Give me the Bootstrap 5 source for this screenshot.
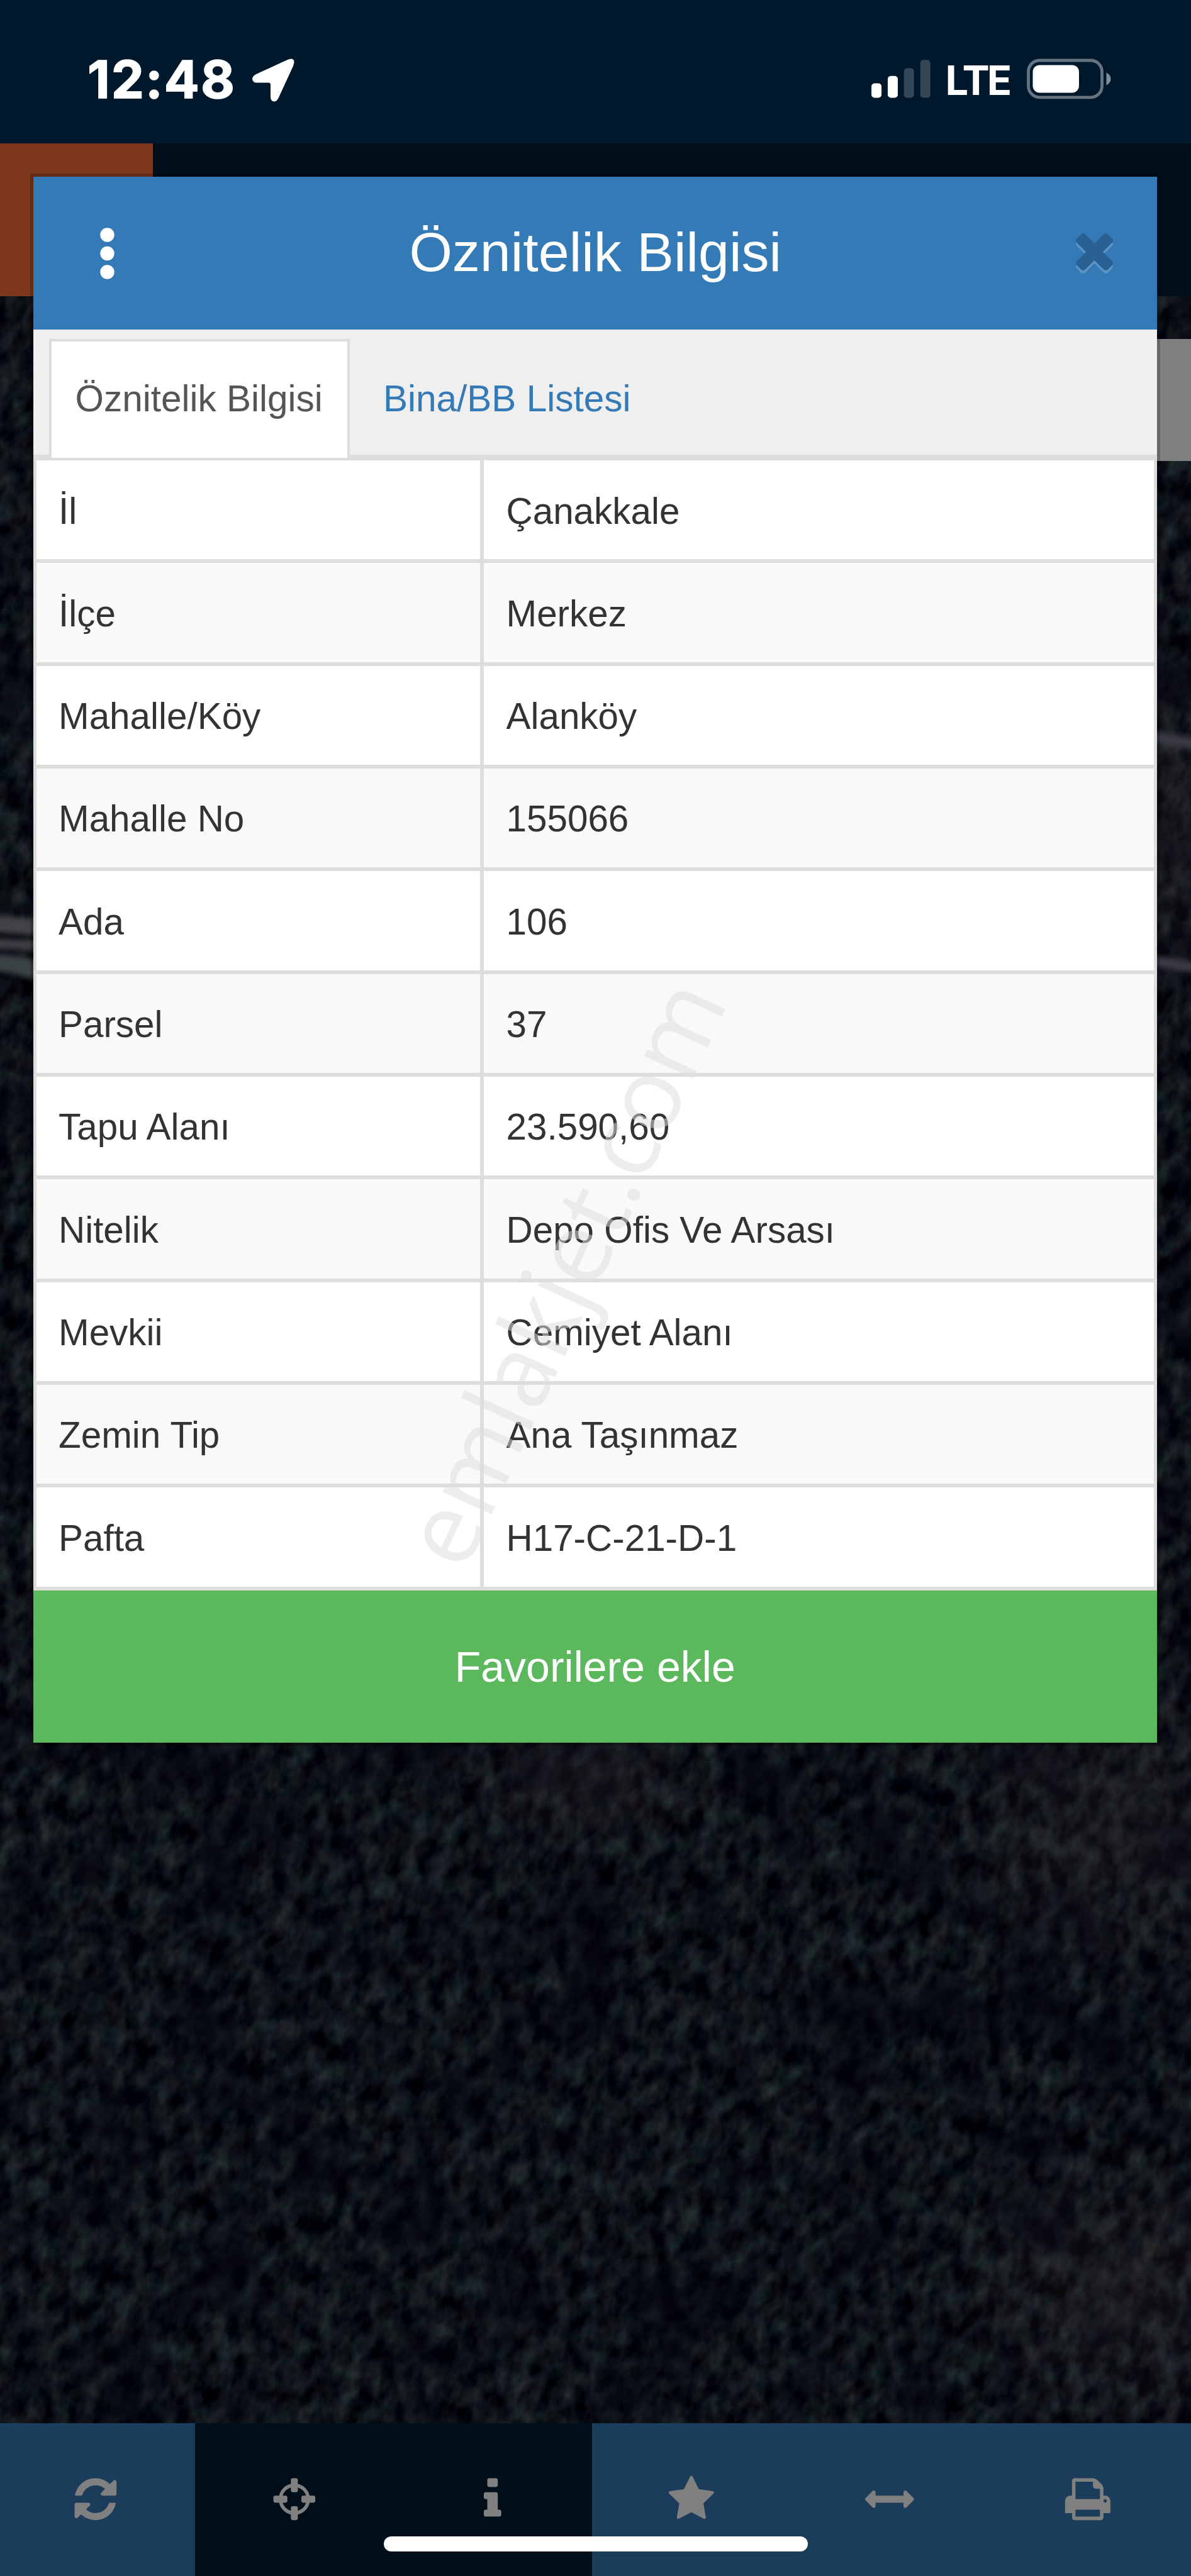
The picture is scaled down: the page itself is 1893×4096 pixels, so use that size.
<!DOCTYPE html>
<html lang="tr">
<head>
  <meta charset="UTF-8" />
  <meta name="viewport" content="width=device-width, initial-scale=1.0"/>
  <title>Öznitelik Bilgisi</title>
  <link href="https://cdn.jsdelivr.net/npm/bootstrap@5.3.0/dist/css/bootstrap.min.css" rel="stylesheet">
  <style>
    body {
      font-family: "Liberation Sans", Arial, sans-serif;
      color: #333;
      background: #070b16;
    }
    .phone {
      width: 1893px;
      height: 4096px;
    }
    .map-bg, .watermark {
      top: 0;
      left: 0;
      width: 1893px;
      height: 4096px;
    }

    /* status bar */
    .status-bar {
      height: 227.5px;
      background: #00182b;
      font-family: Inter, sans-serif;
      color: #fff;
    }
    .status-bar svg { display: block; }
    .clock {
      margin-left: 139px;
      width: 262px;
      padding-top: 78px;
      font-size: 83px;
      font-weight: 700;
      line-height: 97px;
      letter-spacing: 2px;
      -webkit-text-stroke: 1.5px #fff;
      white-space: nowrap;
    }
    .net {
      margin-left: 24px;
      width: 106px;
      padding-top: 88px;
      font-size: 65px;
      font-weight: 700;
      line-height: 79px;
      letter-spacing: -4px;
    }
    .signal { margin-left: 916.6px; }
    .battery { margin-left: 22px; }

    /* page header behind the dialog */
    .app-header { height: 243px; background: #000f1a; }
    .app-logo { width: 243px; background: #7d371b; }
    .side-tab {
      top: 538.5px;
      right: 0;
      width: 60px;
      height: 194px;
      background: #808080;
    }

    /* dialog */
    .dialog {
      top: 281px;
      left: 53px;
      width: 1785.5px;
      background: #ddd;
      box-shadow: 0 0 0 5px rgba(0, 0, 0, .2);
    }
    .dialog-head {
      height: 243px;
      background: #337ab7;
      color: #fff;
      padding: 0 69px 0 106px;
    }
    .dialog-title { font-size: 88px; line-height: 1; margin: 0; padding-bottom: 4px; }
    .tab-strip {
      height: 199px;
      padding: 14.5px 0 0 25px;
      background: #efefef;
      font-size: 58.5px;
      line-height: 1;
    }
    .tab-strip .nav-link {
      height: 189px;
      border: 4px solid transparent;
      border-bottom: 0;
      border-radius: 0;
      padding: 62.5px 37.5px 0;
      color: #337ab7;
      white-space: nowrap;
    }
    .tab-strip .nav-link.active {
      width: 478px;
      background: #fff;
      border-color: #ddd;
      color: #555;
    }
    .tab-strip .nav-item + .nav-item { margin-left: 11.5px; }
    .attr-list {
      padding: 9px 5px 0;
      margin: 0;
      font-size: 58.4px;
      line-height: 64px;
    }
    .attr-row { height: 163.34px; gap: 6px; padding-bottom: 6px; }
    .attr-row dt, .attr-row dd {
      margin: 0;
      padding: 48.5px 36px 0;
      font-weight: 400;
      background: #fff;
    }
    .attr-row dt { width: 704.5px; padding-left: 35px; }
    .attr-row:nth-child(even) > * { background: #f9f9f9; }
    .btn-fav {
      height: 242.5px;
      border: 0;
      border-radius: 0;
      background: #5cb85c;
      color: #fff;
      font-size: 68px;
      line-height: 1;
    }

    /* bottom toolbar */
    .toolbar { height: 243.5px; background: #1b3c5a; color: #808080; }
    .toolbar-item { width: 315.35px; }
    .toolbar-item:first-child { width: 310px; padding-right: 6px; }
    .toolbar-item:last-child { flex: 1; padding-right: 8px; }
    .toolbar-item.pressed { background: #000f1a; }
    .toolbar-item svg { width: 77.7px; height: 77.7px; fill: currentColor; }
    .home-bar {
      left: 609.5px;
      bottom: 39px;
      width: 674.5px;
      height: 24.5px;
      background: #fff;
    }
  </style>
</head>
<body>

<div class="phone position-relative overflow-hidden d-flex flex-column">

  <!-- dimmed satellite map -->
  <svg class="map-bg position-absolute" viewBox="0 0 1893 4096">
    <defs>
      <filter id="trees" x="0" y="0" width="100%" height="100%" color-interpolation-filters="sRGB">
        <feTurbulence type="fractalNoise" baseFrequency="0.040 0.026" numOctaves="3" seed="7"/>
        <feColorMatrix values="0.25 0.06 0 0 -0.104  0.30 0 0.02 0 -0.092  0.26 0.02 0.05 0 -0.074  0 0 0 0 1"/>
      </filter>
      <filter id="soil" x="0" y="0" width="100%" height="100%" color-interpolation-filters="sRGB">
        <feTurbulence type="fractalNoise" baseFrequency="0.007" numOctaves="4" seed="12"/>
        <feColorMatrix values="0 0 0 0 0.01  0 0 0 0 0.01  0 0 0 0 0.06  2.2 0 0 0 -1.05"/>
      </filter>
      <filter id="soft" x="-50%" y="-150%" width="200%" height="400%"><feGaussianBlur stdDeviation="4"/></filter>
      <radialGradient id="earth"><stop offset="0" stop-color="#4a3a3c" stop-opacity="0.22"/><stop offset="1" stop-color="#4a3a3c" stop-opacity="0"/></radialGradient>
    </defs>
    <g transform="rotate(22 946 2048)">
      <rect x="-900" y="-500" width="3700" height="5100" filter="url(#trees)"/>
    </g>
    <rect width="1893" height="4096" filter="url(#soil)"/>
    <ellipse cx="1760" cy="2900" rx="280" ry="280" fill="url(#earth)"/>
    <ellipse cx="1780" cy="3640" rx="300" ry="260" fill="url(#earth)"/>
    <ellipse cx="930" cy="2830" rx="220" ry="130" fill="url(#earth)"/>
    <ellipse cx="1866" cy="1320" rx="110" ry="320" fill="url(#earth)"/>
    <g fill="none" filter="url(#soft)">
      <path d="M-20 1468 L80 1476" stroke="#434346" stroke-width="26"/>
      <path d="M-20 1500 L80 1504" stroke="#3f3f42" stroke-width="16"/>
      <path d="M-20 1530 Q30 1530 80 1552" stroke="#3b4244" stroke-width="28"/>
      <path d="M1820 1170 L1910 1184" stroke="#3b3b44" stroke-width="17"/>
      <path d="M1820 1526 L1910 1540" stroke="#3b3b44" stroke-width="17"/>
    </g>
  </svg>

  <div class="status-bar position-relative d-flex align-items-start">
    <div class="clock">12:48</div>
    <svg width="67" height="170" viewBox="401 0 67 170"><path d="M457 95 L407 118 Q401 121 401 126 Q402 131.500 408 131.500 L427 131.500 Q430 131.500 430 134.500 L430 154 Q430 161 435.500 161.500 Q440 161.500 443 155 L466 105 Q470 94 463 93.500 Q460 93.500 457 95 Z" fill="#fff"/></svg>
    <svg class="signal" width="94" height="170" viewBox="1384.600 0 94 170">
      <rect x="1384.700" y="132.500" width="16" height="23" rx="5" fill="#fff"/>
      <rect x="1410.600" y="120.700" width="16" height="34.800" rx="5" fill="#fff"/>
      <rect x="1436.400" y="108.500" width="16" height="47" rx="5" fill="#334756"/>
      <rect x="1462.300" y="95.200" width="16" height="60.300" rx="5" fill="#334756"/>
    </svg>
    <div class="net">LTE</div>
    <svg class="battery" width="136" height="170" viewBox="1631 0 136 170">
      <rect x="1634.500" y="96" width="117" height="58.800" rx="18" fill="none" stroke="#667481" stroke-width="4.800"/>
      <rect x="1641.500" y="103.400" width="73.500" height="44" rx="11" fill="#fff"/>
      <path d="M1758.500 115.500 Q1765.500 119 1765.500 125.500 Q1765.500 132 1758.500 135.500 Z" fill="#808c96"/>
    </svg>
  </div>

  <div class="app-header position-relative d-flex">
    <div class="app-logo"></div>
  </div>
  <div class="side-tab position-absolute"></div>

  <div class="dialog position-absolute">
    <div class="dialog-head d-flex align-items-center justify-content-between">
      <svg width="23" height="82" viewBox="0 0 23 82" fill="#fff">
        <circle cx="11.500" cy="11.500" r="11.200"/><circle cx="11.500" cy="41" r="11.200"/><circle cx="11.500" cy="70.500" r="11.200"/>
      </svg>
      <h1 class="dialog-title">Öznitelik Bilgisi</h1>
      <svg width="59" height="64" viewBox="302 366 1188 1289">
        <defs><path id="times" d="M1490 1322q0 40-28 68l-136 136q-28 28-68 28t-68-28l-294-294-294 294q-28 28-68 28t-68-28l-136-136q-28-28-28-68t28-68l294-294-294-294q-28-28-28-68t28-68l136-136q28-28 68-28t68 28l294 294 294-294q28-28 68-28t68 28l136 136q28 28 28 68t-28 68l-294 294 294 294q28 28 28 68z"/></defs>
        <use href="#times" y="98" fill="#5c95c5"/>
        <use href="#times" fill="#296292"/>
      </svg>
    </div>

    <ul class="nav tab-strip flex-nowrap">
      <li class="nav-item"><a class="nav-link active">Öznitelik Bilgisi</a></li>
      <li class="nav-item"><a class="nav-link">Bina/BB Listesi</a></li>
    </ul>

    <dl class="attr-list">
      <div class="attr-row d-flex"><dt>İl</dt><dd class="flex-fill">Çanakkale</dd></div>
      <div class="attr-row d-flex"><dt>İlçe</dt><dd class="flex-fill">Merkez</dd></div>
      <div class="attr-row d-flex"><dt>Mahalle/Köy</dt><dd class="flex-fill">Alanköy</dd></div>
      <div class="attr-row d-flex"><dt>Mahalle No</dt><dd class="flex-fill">155066</dd></div>
      <div class="attr-row d-flex"><dt>Ada</dt><dd class="flex-fill">106</dd></div>
      <div class="attr-row d-flex"><dt>Parsel</dt><dd class="flex-fill">37</dd></div>
      <div class="attr-row d-flex"><dt>Tapu Alanı</dt><dd class="flex-fill">23.590,60</dd></div>
      <div class="attr-row d-flex"><dt>Nitelik</dt><dd class="flex-fill">Depo Ofis Ve Arsası</dd></div>
      <div class="attr-row d-flex"><dt>Mevkii</dt><dd class="flex-fill">Cemiyet Alanı</dd></div>
      <div class="attr-row d-flex"><dt>Zemin Tip</dt><dd class="flex-fill">Ana Taşınmaz</dd></div>
      <div class="attr-row d-flex"><dt>Pafta</dt><dd class="flex-fill">H17-C-21-D-1</dd></div>
    </dl>

    <button type="button" class="btn btn-fav d-block w-100">Favorilere ekle</button>
  </div>

  <div class="toolbar position-relative d-flex mt-auto">
    <div class="toolbar-item d-flex align-items-center justify-content-center">
      <svg viewBox="0 0 1792 1792"><path d="M1639 1056q0 5-1 7-64 268-268 434.500t-478 166.500q-146 0-282.500-55t-243.500-157l-129 129q-19 19-45 19t-45-19-19-45v-448q0-26 19-45t45-19h448q26 0 45 19t19 45-19 45l-137 137q71 66 161 102t187 36q134 0 250-65t186-179q11-17 53-117 8-23 30-23h192q13 0 22.500 9.500t9.500 22.500zm25-800v448q0 26-19 45t-45 19h-448q-26 0-45-19t-19-45 19-45l138-138q-148-137-349-137-134 0-250 65t-186 179q-11 17-53 117-8 23-30 23h-199q-13 0-22.500-9.500t-9.500-22.500v-7q65-268 270-434.500t480-166.500q146 0 284 55.500t245 156.500l130-129q19-19 45-19t45 19 19 45z"/></svg>
    </div>
    <div class="toolbar-item pressed d-flex align-items-center justify-content-center">
      <svg viewBox="0 0 1792 1792"><path d="M1325 1024h-109q-26 0-45-19t-19-45v-128q0-26 19-45t45-19h109q-32-108-112.500-188.500t-188.500-112.500v109q0 26-19 45t-45 19h-128q-26 0-45-19t-19-45v-109q-108 32-188.500 112.500t-112.500 188.500h109q26 0 45 19t19 45v128q0 26-19 45t-45 19h-109q32 108 112.500 188.500t188.500 112.500v-109q0-26 19-45t45-19h128q26 0 45 19t19 45v109q108-32 188.500-112.500t112.500-188.500zm339-192v128q0 26-19 45t-45 19h-143q-37 161-154.500 278.500t-278.500 154.500v143q0 26-19 45t-45 19h-128q-26 0-45-19t-19-45v-143q-161-37-278.500-154.500t-154.500-278.500h-143q-26 0-45-19t-19-45v-128q0-26 19-45t45-19h143q37-161 154.500-278.500t278.500-154.500v-143q0-26 19-45t45-19h128q26 0 45 19t19 45v143q161 37 278.500 154.500t154.500 278.500h143q26 0 45 19t19 45z"/></svg>
    </div>
    <div class="toolbar-item pressed d-flex align-items-center justify-content-center">
      <svg viewBox="0 0 1792 1792"><path d="M1216 1344v128q0 26-19 45t-45 19h-512q-26 0-45-19t-19-45v-128q0-26 19-45t45-19h64v-384h-64q-26 0-45-19t-19-45v-128q0-26 19-45t45-19h384q26 0 45 19t19 45v576h64q26 0 45 19t19 45zm-128-1152v192q0 26-19 45t-45 19h-256q-26 0-45-19t-19-45v-192q0-26 19-45t45-19h256q26 0 45 19t19 45z"/></svg>
    </div>
    <div class="toolbar-item d-flex align-items-center justify-content-center">
      <svg viewBox="0 0 1792 1792"><path d="M1728 647q0 22-26 48l-363 354 86 500q1 7 1 20 0 21-10.500 35.500t-30.500 14.500q-19 0-40-12l-449-236-449 236q-22 12-40 12-21 0-31.500-14.500t-10.500-35.500q0-6 2-20l86-500-364-354q-25-27-25-48 0-37 56-46l502-73 225-455q19-41 49-41t49 41l225 455 502 73q56 9 56 46z"/></svg>
    </div>
    <div class="toolbar-item d-flex align-items-center justify-content-center">
      <svg viewBox="0 0 1792 1792"><path d="M1792 896q0 26-19 45l-256 256q-19 19-45 19t-45-19-19-45v-128h-1024v128q0 26-19 45t-45 19-45-19l-256-256q-19-19-19-45t19-45l256-256q19-19 45-19t45 19 19 45v128h1024v-128q0-26 19-45t45-19 45 19l256 256q19 19 19 45z"/></svg>
    </div>
    <div class="toolbar-item d-flex align-items-center justify-content-center">
      <svg viewBox="0 0 1792 1792"><path d="M448 1536h896v-256h-896v256zm0-640h896v-384h-160q-40 0-68-28t-28-68v-160h-640v640zm1152 64q0-26-19-45t-45-19-45 19-19 45 19 45 45 19 45-19 19-45zm128 0v416q0 13-9.500 22.500t-22.500 9.500h-224v160q0 40-28 68t-68 28h-960q-40 0-68-28t-28-68v-160h-224q-13 0-22.500-9.500t-9.500-22.500v-416q0-79 56.500-135.500t135.500-56.500h64v-544q0-40 28-68t68-28h672q40 0 88 20t76 48l152 152q28 28 48 76t20 88v256h64q79 0 135.500 56.500t56.500 135.500z"/></svg>
    </div>
    <div class="home-bar position-absolute rounded-pill"></div>
  </div>

  <svg class="watermark position-absolute pe-none" viewBox="0 0 1893 4096">
    <text transform="translate(738 2502) rotate(-65.200)" font-family="Open Sans, Noto Sans, sans-serif" font-size="160" font-weight="500" fill="#dcdcdc" fill-opacity="0.520">emlakjet.com</text>
  </svg>
</div>

<script src="https://cdn.jsdelivr.net/npm/bootstrap@5.3.0/dist/js/bootstrap.bundle.min.js"></script>
</body>
</html>
